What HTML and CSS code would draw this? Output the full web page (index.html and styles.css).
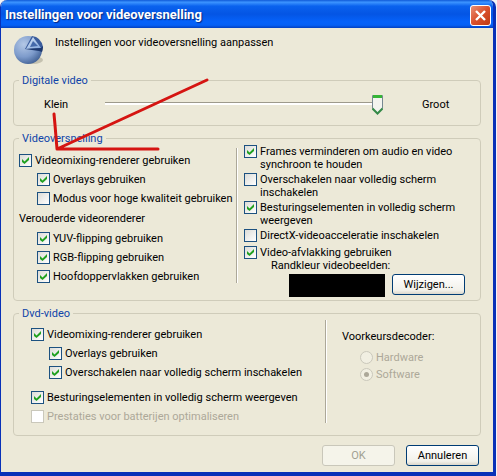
FILE: index.html
```
<!DOCTYPE html>
<html lang="nl">
<head>
<meta charset="UTF-8">
<title>Instellingen voor videoversnelling</title>
<link rel="stylesheet" href="styles.css">
</head>
<body>
<div class="window">
    <div class="titlebar">
        <h1>Instellingen voor videoversnelling</h1>
        <button type="button" class="close" aria-label="Sluiten">
            <svg width="13" height="13" viewBox="0 0 13 13"><path d="M2 2L11 11M11 2L2 11" stroke="#fff" stroke-width="2.4"/></svg>
        </button>
    </div>
    <form class="content">
        <div class="intro">
            <svg class="logo" width="32" height="32" viewBox="0 0 32 32">
                <defs>
                    <radialGradient id="ball" cx="0.35" cy="0.3" r="0.75">
                        <stop offset="0" stop-color="#b4c8e6"/>
                        <stop offset="0.6" stop-color="#7d9bcb"/>
                        <stop offset="1" stop-color="#426296"/>
                    </radialGradient>
                    <linearGradient id="wedge" x1="0" y1="0" x2="1" y2="1">
                        <stop offset="0" stop-color="#dce8f6"/>
                        <stop offset="1" stop-color="#7ea4dc"/>
                    </linearGradient>
                </defs>
                <ellipse cx="20" cy="26" rx="10" ry="4" fill="#aaa694" opacity="0.6"/>
                <circle cx="15" cy="16" r="14" fill="url(#ball)"/>
                <path d="M12 15L19 2Q28 3 30 13Q30 15 28 15Z" fill="#3a5c9c"/>
                <path d="M13 15L20 3L28 14Z" fill="url(#wedge)"/>
                <path d="M17 13L20 7L25 12Z" fill="#4469aa"/>
                <path d="M12 15L28 14L30 12Q30 16 29 18L26 17Z" fill="#1d386e"/>
            </svg>
            <p>Instellingen voor videoversnelling aanpassen</p>
        </div>

        <fieldset>
            <legend>Digitale video</legend>
            <div class="level">
                <label for="level">Klein</label>
                <input type="range" id="level" min="0" max="100" value="100">
                <span>Groot</span>
            </div>
        </fieldset>

        <fieldset class="accel">
            <legend>Videoversnelling</legend>
            <div class="columns">
                <div class="list">
                    <label><input type="checkbox" checked>Videomixing-renderer gebruiken</label>
                    <label class="sub"><input type="checkbox" checked>Overlays gebruiken</label>
                    <label class="sub"><input type="checkbox">Modus voor hoge kwaliteit gebruiken</label>
                    <p>Verouderde videorenderer</p>
                    <label class="sub"><input type="checkbox" checked>YUV-flipping gebruiken</label>
                    <label class="sub"><input type="checkbox" checked>RGB-flipping gebruiken</label>
                    <label class="sub"><input type="checkbox" checked>Hoofdoppervlakken gebruiken</label>
                </div>
                <div class="options">
                    <label><input type="checkbox" checked><span>Frames verminderen om audio en video<br>synchroon te houden</span></label>
                    <label><input type="checkbox"><span>Overschakelen naar volledig scherm<br>inschakelen</span></label>
                    <label><input type="checkbox" checked><span>Besturingselementen in volledig scherm<br>weergeven</span></label>
                    <label class="single"><input type="checkbox">DirectX-videoacceleratie inschakelen</label>
                    <label><input type="checkbox" checked>Video-afvlakking gebruiken</label>
                    <p>Randkleur videobeelden:</p>
                    <div class="border-color">
                        <div class="swatch"></div>
                        <button type="button">Wijzigen...</button>
                    </div>
                </div>
            </div>
        </fieldset>

        <fieldset class="dvd">
            <legend>Dvd-video</legend>
            <div class="columns">
                <div class="list">
                    <label><input type="checkbox" checked>Videomixing-renderer gebruiken</label>
                    <label class="sub"><input type="checkbox" checked>Overlays gebruiken</label>
                    <label class="sub"><input type="checkbox" checked>Overschakelen naar volledig scherm inschakelen</label>
                    <label class="apart"><input type="checkbox" checked>Besturingselementen in volledig scherm weergeven</label>
                    <label class="off"><input type="checkbox" disabled>Prestaties voor batterijen optimaliseren</label>
                </div>
                <div class="decoder" role="radiogroup" aria-labelledby="decoder">
                    <p id="decoder">Voorkeursdecoder:</p>
                    <label class="off"><input type="radio" name="decoder" disabled>Hardware</label>
                    <label class="off"><input type="radio" name="decoder" checked disabled>Software</label>
                </div>
            </div>
        </fieldset>

        <div class="buttons">
            <button type="submit" disabled>OK</button>
            <button type="button" class="default">Annuleren</button>
        </div>
    </form>
    <svg class="arrow" width="220" height="160" viewBox="0 0 220 160">
        <path d="M53 114L54 125L56 149L206 80M56 149H157" fill="none" stroke="#d51512" stroke-width="3" stroke-linecap="round" stroke-linejoin="round"/>
    </svg>
</div>
</body>
</html>
```
FILE: styles.css
```
*{
    margin:0;
    padding:0;
    box-sizing: border-box;
}
body{
    background: #f4f4f6;
    font: 11px/13px Roboto,sans-serif;
    color: #000;
}
.window{
    position:relative;
    display: flex;
    flex-direction: column;
    min-height: 100vh;
    margin-right: 1px;
    border: solid #0831b8;
    border-width: 0 3px 4px 1px;
    border-radius: 7px 7px 0 0;
    background: #ece9d8;
    overflow: hidden;
    white-space: nowrap;
}
.titlebar{
    display: flex;
    align-items: center;
    justify-content: space-between;
    height: 28px;
    padding: 2px 2px 0 4px;
    background: linear-gradient(#0f5ad8 0,#3c94ff 8%,#0a62ee 22%,#0455e4 50%,#0562fa 78%,#0560f5 90%,#0340c0 100%);
}
.titlebar h1{
    font: bold 13px/16px Roboto,sans-serif;
    color: #fff;
    text-shadow: 1px 1px 1px #0a2a80;
}
.close{
    display: flex;
    align-items: center;
    justify-content: center;
    width: 21px;
    height: 21px;
    border: 1px solid #fff;
    border-radius: 3px;
    background: linear-gradient(135deg,#ea9076,#d9502c 50%,#c03a12);
}
.content{
    display: flex;
    flex-direction: column;
    flex: 1;
    padding: 6px 12px;
}
.intro{
    display: flex;
    gap: 10px;
    height: 40px;
}
.intro p{
    padding-top: 2px;
}
fieldset{
    min-width: 0;
    margin-bottom: 6px;
    border: 1px solid #cfccba;
    border-radius: 4px;
}
legend{
    margin-left: 5px;
    padding: 0 3px;
    color: #0f44a8;
}
label{
    display: flex;
    align-items: flex-start;
    gap: 3px;
}
.level{
    display: flex;
    align-items: center;
    padding: 6px 30px 10px;
}
.level label{
    width: 61px;
}
.level input{
    flex: 1;
}
.level span{
    width: 28px;
    margin-left: 39px;
}
input[type=range]{
    appearance: none;
    min-width: 0;
    height: 22px;
    background: linear-gradient(#9d9a8c,#9d9a8c) 0 9px/100% 1px no-repeat,
        linear-gradient(#fff,#fff) 0 10px/100% 2px no-repeat;
}
input[type=range]::-webkit-slider-thumb{
    appearance: none;
    width: 11px;
    height: 21px;
    background: url("data:image/svg+xml,%3Csvg xmlns='http://www.w3.org/2000/svg' width='11' height='21'%3E%3Cpath d='M.5 1.5h10v13l-5 5-5-5z' fill='%23f3f4ef' stroke='%23778892'/%3E%3Cpath d='M1 1h9v3H1z' fill='%2336b536'/%3E%3Cpath d='M.5 14.5l5 5 5-5' fill='none' stroke='%23358a48' stroke-width='2'/%3E%3C/svg%3E") no-repeat;
}
input[type=checkbox],
input[type=radio]{
    appearance: none;
    flex: none;
    position: relative;
    width: 13px;
    height: 13px;
    border: 1px solid #1c5180;
    background: linear-gradient(135deg,#dcdcd7,#fff);
}
input[type=checkbox]:checked::before{
    content: "";
    position: absolute;
    top: 2px;
    left: 2px;
    width: 7px;
    height: 7px;
    background: #21a121;
    clip-path: polygon(0 29%,36% 64%,100% 0,100% 43%,36% 100%,0 71%);
}
input[type=radio]{
    border-color: #cac8bb;
    border-radius: 50%;
    background: #f1efe2;
}
input[type=radio]:checked::before{
    content: "";
    position: absolute;
    top: 3px;
    left: 3px;
    width: 5px;
    height: 5px;
    border-radius: 50%;
    background: #aca899;
}
input[type=checkbox]:disabled{
    border-color: #cac8bb;
    background: #fff;
}
.off{
    color: #aca899;
}
.columns{
    display: flex;
}
.list{
    display: flex;
    flex-direction: column;
    gap: 6px;
}
.sub{
    margin-left: 18px;
}
.accel .columns{
    padding: 0 5px 3px;
}
.accel .list{
    flex: none;
    width: 218px;
    margin: 3px 0 14px;
    padding-top: 6px;
    border-right: 1px solid #aca899;
    box-shadow: 1px 0 #fff;
}
.accel .list p{
    margin: 1px 0;
}
.options{
    display: flex;
    flex-direction: column;
    flex: 1;
    gap: 2px;
    padding-left: 7px;
}
.options .single{
    margin-bottom: 2px;
}
.options p{
    margin: -2px 0 0 27px;
}
.border-color{
    display: flex;
    justify-content: flex-end;
    gap: 7px;
    padding-right: 10px;
}
.swatch{
    width: 96px;
    height: 23px;
    background: #000;
}
button{
    font: inherit;
}
.border-color button,
.buttons button{
    width: 73px;
    height: 21px;
    border: 1px solid #003c74;
    border-radius: 3px;
    background: linear-gradient(#fff,#f2f1ea 80%,#dbd7cb);
}
.dvd .columns{
    padding: 0 17px 12px;
}
.dvd .list{
    flex: none;
    width: 295px;
    padding-top: 8px;
    border-right: 1px solid #aca899;
    box-shadow: 1px 0 #fff;
}
.dvd .apart{
    margin-top: 6px;
}
.decoder{
    display: flex;
    flex-direction: column;
    gap: 4px;
    padding: 10px 0 0 16px;
}
.decoder p{
    margin-bottom: 4px;
}
.decoder label{
    margin-left: 18px;
}
.buttons{
    display: flex;
    justify-content: flex-end;
    gap: 11px;
    padding: 3px 2px 0;
}
.buttons button:disabled{
    border-color: #c9c7ba;
    background: #f5f4ea;
    color: #a1a192;
}
/* red marker drawn over the dialog */
.arrow{
    position: absolute;
    top: 0;
    left: 0;
    pointer-events: none;
}
```
